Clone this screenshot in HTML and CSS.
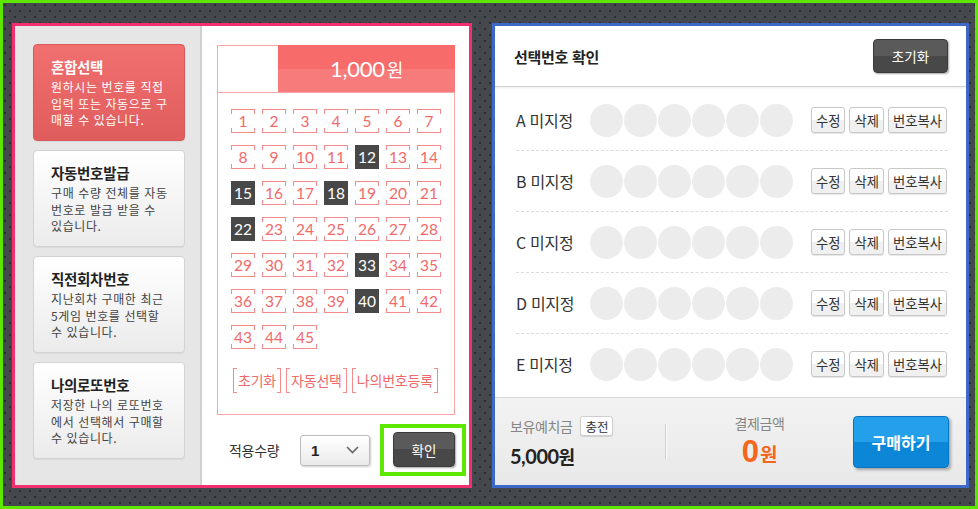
FILE: index.html
```html
<!DOCTYPE html>
<html lang="ko">
<head>
<meta charset="utf-8">
<title>로또 구매</title>
<link rel="stylesheet" href="styles.css">
</head>
<body>
<div class="frame">
  <section class="panel-left">
    <aside class="types">
      <div class="card active">
        <h3>혼합선택</h3>
        <p>원하시는 번호를 직접<br>입력 또는 자동으로 구<br>매할 수 있습니다.</p>
      </div>
      <div class="card">
        <h3>자동번호발급</h3>
        <p>구매 수량 전체를 자동<br>번호로 발급 받을 수<br>있습니다.</p>
      </div>
      <div class="card">
        <h3>직전회차번호</h3>
        <p>지난회차 구매한 최근<br>5게임 번호를 선택할<br>수 있습니다.</p>
      </div>
      <div class="card">
        <h3>나의로또번호</h3>
        <p>저장한 나의 로또번호<br>에서 선택해서 구매할<br>수 있습니다.</p>
      </div>
    </aside>
    <div class="picker">
      <div class="board">
        <div class="board-head">
          <span class="blank"></span>
          <span class="price">1,000<small>원</small></span>
        </div>
        <div class="nums">
          <span class="num">1</span><span class="num">2</span><span class="num">3</span><span class="num">4</span><span class="num">5</span><span class="num">6</span><span class="num">7</span>
          <span class="num">8</span><span class="num">9</span><span class="num">10</span><span class="num">11</span><span class="num sel">12</span><span class="num">13</span><span class="num">14</span>
          <span class="num sel">15</span><span class="num">16</span><span class="num">17</span><span class="num sel">18</span><span class="num">19</span><span class="num">20</span><span class="num">21</span>
          <span class="num sel">22</span><span class="num">23</span><span class="num">24</span><span class="num">25</span><span class="num">26</span><span class="num">27</span><span class="num">28</span>
          <span class="num">29</span><span class="num">30</span><span class="num">31</span><span class="num">32</span><span class="num sel">33</span><span class="num">34</span><span class="num">35</span>
          <span class="num">36</span><span class="num">37</span><span class="num">38</span><span class="num">39</span><span class="num sel">40</span><span class="num">41</span><span class="num">42</span>
          <span class="num">43</span><span class="num">44</span><span class="num">45</span>
        </div>
        <div class="actions">
          <span class="act">초기화</span>
          <span class="act">자동선택</span>
          <span class="act">나의번호등록</span>
        </div>
      </div>
      <div class="apply">
        <span class="apply-label">적용수량</span>
        <div class="select">
          <span class="select-val">1</span>
          <svg width="13" height="8" viewBox="0 0 13 8"><polyline points="1,1 6.5,6.5 12,1" fill="none" stroke="#666" stroke-width="1.6"/></svg>
        </div>
        <div class="highlight"><button class="dark-btn ok">확인</button></div>
      </div>
    </div>
  </section>

  <section class="panel-right">
    <header class="right-head">
      <h2>선택번호 확인</h2>
      <button class="dark-btn reset">초기화</button>
    </header>
    <div class="rows">
      <div class="row">
        <span class="row-label">A 미지정</span>
        <div class="balls"><i></i><i></i><i></i><i></i><i></i><i></i></div>
        <div class="row-btns"><button class="sbtn">수정</button><button class="sbtn">삭제</button><button class="sbtn">번호복사</button></div>
      </div>
      <div class="row">
        <span class="row-label">B 미지정</span>
        <div class="balls"><i></i><i></i><i></i><i></i><i></i><i></i></div>
        <div class="row-btns"><button class="sbtn">수정</button><button class="sbtn">삭제</button><button class="sbtn">번호복사</button></div>
      </div>
      <div class="row">
        <span class="row-label">C 미지정</span>
        <div class="balls"><i></i><i></i><i></i><i></i><i></i><i></i></div>
        <div class="row-btns"><button class="sbtn">수정</button><button class="sbtn">삭제</button><button class="sbtn">번호복사</button></div>
      </div>
      <div class="row">
        <span class="row-label">D 미지정</span>
        <div class="balls"><i></i><i></i><i></i><i></i><i></i><i></i></div>
        <div class="row-btns"><button class="sbtn">수정</button><button class="sbtn">삭제</button><button class="sbtn">번호복사</button></div>
      </div>
      <div class="row">
        <span class="row-label">E 미지정</span>
        <div class="balls"><i></i><i></i><i></i><i></i><i></i><i></i></div>
        <div class="row-btns"><button class="sbtn">수정</button><button class="sbtn">삭제</button><button class="sbtn">번호복사</button></div>
      </div>
    </div>
    <footer class="bar">
      <div class="deposit">
        <div class="deposit-top"><span class="muted">보유예치금</span><button class="charge">충전</button></div>
        <div class="deposit-amt">5,000<small>원</small></div>
      </div>
      <div class="divider"></div>
      <div class="pay">
        <div class="muted">결제금액</div>
        <div class="pay-amt">0<small>원</small></div>
      </div>
      <button class="buy">구매하기</button>
    </footer>
  </section>
</div>
</body>
</html>
```

FILE: styles.css
```css
html, body {
  margin: 0;
  padding: 0;
}
body {
  width: 978px;
  height: 509px;
  overflow: hidden;
  font-family: "Noto Sans CJK KR", "Noto Sans", sans-serif;
  color: #333;
}
button {
  font-family: inherit;
  cursor: pointer;
  white-space: nowrap;
}
.frame {
  box-sizing: border-box;
  width: 978px;
  height: 509px;
  border: 3px solid #5ee600;
  background-color: #45484c;
  background-image:
    radial-gradient(circle, #2b2d30 0.9px, transparent 1.5px),
    radial-gradient(circle, #2b2d30 0.9px, transparent 1.5px);
  background-size: 10px 12px;
  background-position: 2px 2px, 7px 8px;
  padding: 20px 6px 18px 9px;
  display: flex;
  gap: 20px;
}

/* ---------- left panel ---------- */
.panel-left {
  box-sizing: border-box;
  width: 460px;
  height: 465px;
  border: 3px solid #f2306f;
  background: #fff;
  display: flex;
}
.types {
  box-sizing: border-box;
  width: 187px;
  background: #e6e6e6;
  border-right: 2px solid #d0d0d0;
  padding: 18px 0 0 18px;
  display: flex;
  flex-direction: column;
  gap: 9px;
}
.card {
  box-sizing: border-box;
  width: 152px;
  height: 97px;
  border: 1px solid #d3d3d3;
  border-radius: 4px;
  padding: 12px 0 0 17px;
  background: linear-gradient(#ffffff, #ebebeb);
  box-shadow: 0 1px 1px rgba(0,0,0,0.06);
}
.card h3 {
  margin: 0;
  font-size: 14.5px;
  line-height: 19px;
  font-weight: 700;
  color: #222;
  letter-spacing: -0.3px;
}
.card p {
  margin: 3px 0 0;
  font-size: 12px;
  line-height: 16.5px;
  color: #444;
  letter-spacing: 0.6px;
}
.card.active {
  background: linear-gradient(#f06f6f, #e05d5d);
  border-color: #d95757;
}
.card.active h3,
.card.active p {
  color: #fff;
}

.picker {
  flex: 1;
  padding: 19px 0 0 15px;
}
.board {
  box-sizing: border-box;
  width: 238px;
  height: 370px;
  border: 1px solid #f8a5a5;
}
.board-head {
  height: 46px;
  display: flex;
  border-bottom: 1px solid #f8a5a5;
}
.blank {
  width: 60px;
}
.price {
  flex: 1;
  margin: -1px -1px 0 0;
  background: linear-gradient(#f76b6b 50%, #f87b7b 50%);
  color: #fff;
  font-family: Lato, "Noto Sans CJK KR", sans-serif;
  font-size: 22px;
  display: flex;
  align-items: center;
  justify-content: center;
  letter-spacing: -0.3px;
}
.price small {
  font-family: "Noto Sans CJK KR", sans-serif;
  font-size: 18px;
  margin-left: 2px;
}
.nums {
  display: grid;
  grid-template-columns: repeat(7, 24px);
  column-gap: 7px;
  row-gap: 12px;
  padding: 16px 0 0 13px;
}
.num {
  --bc: #f58a8a;
  width: 24px;
  height: 24px;
  line-height: 24px;
  text-align: center;
  font-family: Lato, sans-serif;
  font-size: 15.5px;
  color: #f26a6a;
  background:
    linear-gradient(var(--bc), var(--bc)) 0 0 / 100% 1px no-repeat,
    linear-gradient(var(--bc), var(--bc)) 0 100% / 100% 1px no-repeat,
    linear-gradient(var(--bc), var(--bc)) 0 0 / 1px 5px no-repeat,
    linear-gradient(var(--bc), var(--bc)) 100% 0 / 1px 5px no-repeat,
    linear-gradient(var(--bc), var(--bc)) 0 100% / 1px 5px no-repeat,
    linear-gradient(var(--bc), var(--bc)) 100% 100% / 1px 5px no-repeat;
}
.num.sel {
  background: #484848;
  color: #fff;
}
.actions {
  display: flex;
  gap: 5px;
  padding-left: 15px;
  margin-top: 19px;
}
.act {
  --bc: #f58a8a;
  height: 25px;
  line-height: 25px;
  padding: 0 5px;
  font-size: 14px;
  color: #f06a6a;
  letter-spacing: -0.2px;
  background:
    linear-gradient(var(--bc), var(--bc)) 0 0 / 1px 100% no-repeat,
    linear-gradient(var(--bc), var(--bc)) 100% 0 / 1px 100% no-repeat,
    linear-gradient(var(--bc), var(--bc)) 0 0 / 4px 1px no-repeat,
    linear-gradient(var(--bc), var(--bc)) 0 100% / 4px 1px no-repeat,
    linear-gradient(var(--bc), var(--bc)) 100% 0 / 4px 1px no-repeat,
    linear-gradient(var(--bc), var(--bc)) 100% 100% / 4px 1px no-repeat;
}
.apply {
  display: flex;
  align-items: center;
  margin: 9px 0 0 12px;
}
.apply-label {
  font-size: 14px;
  color: #333;
  width: 56px;
  margin-right: 15px;
  letter-spacing: -0.3px;
}
.select {
  box-sizing: border-box;
  width: 70px;
  height: 31px;
  border: 1px solid #bdbdbd;
  border-radius: 3px;
  background: linear-gradient(#ffffff, #eaeaea);
  box-shadow: 1px 1px 2px rgba(0,0,0,0.2);
  display: flex;
  align-items: center;
  justify-content: space-between;
  padding: 0 10px 0 10px;
  margin-right: 10px;
}
.select-val {
  font-family: "Liberation Sans", Arial, sans-serif;
  font-weight: 700;
  font-size: 15px;
  color: #222;
}
.highlight {
  border: 4px solid #5ce800;
  padding: 4px 7px 5px 9px;
  display: flex;
}
.dark-btn {
  border: 1px solid #3a3a3a;
  border-radius: 4px;
  background: linear-gradient(#5a5a5a 50%, #484848 50%);
  color: #fff;
  font-size: 13.5px;
  box-shadow: 1px 1px 2px rgba(0,0,0,0.35);
  padding: 0;
}
.ok {
  width: 62px;
  height: 35px;
}

/* ---------- right panel ---------- */
.panel-right {
  box-sizing: border-box;
  width: 477px;
  height: 465px;
  border: 3px solid #3e69c9;
  background: #fff;
  display: flex;
  flex-direction: column;
}
.right-head {
  box-sizing: border-box;
  height: 61px;
  flex: none;
  border-bottom: 1px solid #d2d2d2;
  box-shadow: 0 1px 2px rgba(0,0,0,0.08);
  display: flex;
  align-items: center;
  justify-content: space-between;
  padding: 0 18px 0 19px;
}
.right-head h2 {
  margin: 0;
  font-size: 15px;
  font-weight: 700;
  color: #222;
  letter-spacing: -0.3px;
}
.reset {
  width: 75px;
  height: 34px;
}
.rows {
  padding: 3px 18px 0 21px;
}
.row {
  height: 60px;
  display: flex;
  align-items: center;
  border-bottom: 1px dashed #dcdcdc;
}
.row:last-child {
  border-bottom: none;
}
.row-label {
  flex: none;
  width: 74px;
  font-size: 16px;
  color: #333;
  letter-spacing: -0.3px;
}
.balls {
  flex: none;
  display: flex;
  gap: 1px;
}
.balls i {
  width: 33px;
  height: 33px;
  border-radius: 50%;
  background: #ececec;
}
.row-btns {
  flex: none;
  display: flex;
  gap: 4px;
  margin-left: 18px;
}
.sbtn {
  flex: none;
  height: 26px;
  padding: 0 4px;
  font-size: 13.3px;
  color: #333;
  border: 1px solid #c8c8c8;
  border-radius: 3px;
  background: linear-gradient(#ffffff 50%, #f0f0f0 50%);
  box-shadow: 0 1px 1px rgba(0,0,0,0.1);
}
.bar {
  margin-top: auto;
  box-sizing: border-box;
  height: 88px;
  border-top: 1px solid #d6d6d6;
  background: linear-gradient(#f3f3f3, #e8e8e8);
  display: flex;
  align-items: center;
  padding: 0 17px 0 15px;
}
.deposit {
  width: 155px;
}
.deposit-top {
  display: flex;
  align-items: center;
  gap: 8px;
  height: 20px;
}
.muted {
  font-size: 14px;
  color: #858585;
  letter-spacing: -0.4px;
}
.charge {
  height: 20px;
  padding: 0 4px;
  font-size: 12.5px;
  color: #333;
  border: 1px solid #cfcfcf;
  border-radius: 3px;
  background: #fff;
  box-shadow: 0 1px 1px rgba(0,0,0,0.12);
}
.deposit-amt {
  margin-top: 8px;
  font-family: Lato, "Noto Sans CJK KR", sans-serif;
  font-size: 20px;
  font-weight: 700;
  color: #222;
  line-height: 24px;
  letter-spacing: -0.5px;
}
.deposit-amt small {
  font-family: "Noto Sans CJK KR", sans-serif;
  font-size: 18px;
}
.divider {
  width: 1px;
  height: 35px;
  background: #d0d0d0;
  box-shadow: 1px 0 0 #fafafa;
}
.pay {
  flex: 1;
  text-align: center;
}
.pay-amt {
  font-family: "Liberation Sans", Arial, sans-serif;
  font-size: 31px;
  font-weight: 700;
  color: #f4661c;
  line-height: 34px;
  margin-top: 2px;
}
.pay-amt small {
  font-family: "Noto Sans CJK KR", sans-serif;
  font-size: 19px;
  margin-left: 1px;
}
.buy {
  width: 96px;
  height: 52px;
  border: 1px solid #0a74c2;
  border-radius: 4px;
  background: linear-gradient(#249fe9 50%, #0c87d8 50%);
  color: #fff;
  font-size: 16px;
  font-weight: 700;
  box-shadow: 2px 2px 3px rgba(0,0,0,0.3);
}
```
